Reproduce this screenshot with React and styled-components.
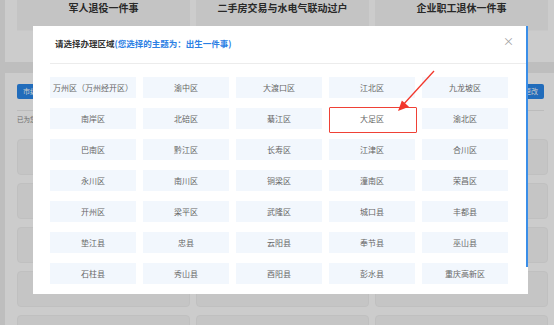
import React from "react";
import styled, { createGlobalStyle } from "styled-components";

const topics = ["军人退役一件事", "二手房交易与水电气联动过户", "企业职工退休一件事"];

const areas = [
  "万州区（万州经开区）", "渝中区", "大渡口区", "江北区", "九龙坡区",
  "南岸区", "北碚区", "綦江区", "大足区", "渝北区",
  "巴南区", "黔江区", "长寿区", "江津区", "合川区",
  "永川区", "南川区", "铜梁区", "潼南区", "荣昌区",
  "开州区", "梁平区", "武隆区", "城口县", "丰都县",
  "垫江县", "忠县", "云阳县", "奉节县", "巫山县",
  "石柱县", "秀山县", "酉阳县", "彭水县", "重庆高新区",
];

const GlobalStyle = createGlobalStyle`
  html, body {
    margin: 0;
    padding: 0;
  }
  body {
    width: 554px;
    height: 325px;
    overflow: hidden;
    background: #eeeeee;
    font-family: "Noto Sans CJK SC", "Noto Sans", sans-serif;
  }
`;

function App() {
  return (
    <>
      <GlobalStyle />
      <Page>
        <TopPanel>
          <TopicRow>
            {topics.map((t) => (
              <TopicCard key={t}>{t}</TopicCard>
            ))}
          </TopicRow>
        </TopPanel>
        <ListPanel>
          <Toolbar>
            <BlueButton>市级事项</BlueButton>
            <BlueButton>切换区域更改</BlueButton>
          </Toolbar>
          <Hint>已为您筛选出以下事项</Hint>
          <CardGrid>
            {Array.from({ length: 15 }).map((_, i) => (
              <ItemCard key={i} />
            ))}
          </CardGrid>
        </ListPanel>
      </Page>

      <Backdrop />
      <Modal>
        <Header>
          <Title>
            请选择办理区域<Topic>(您选择的主题为：出生一件事)</Topic>
          </Title>
          <Close>×</Close>
        </Header>
        <AreaGrid>
          {areas.map((a) => (
            <AreaCell key={a} $active={a === "大足区"}>
              {a}
            </AreaCell>
          ))}
        </AreaGrid>
        <ScrollThumb />
        <Arrow width="495" height="268" viewBox="0 0 495 268">
          <line x1="401" y1="45" x2="369" y2="80" stroke="#f2372c" strokeWidth="1.3" />
          <polygon points="365,85 376,80.8 368.9,74.4" fill="#f2372c" />
        </Arrow>
      </Modal>
    </>
  );
}

export default App;

// page under the mask
const Page = styled.div`
  height: 325px;
  padding-left: 5px;
  display: flex;
  flex-direction: column;
  gap: 11px;
  overflow: hidden;
`;

const TopPanel = styled.div`
  flex: none;
  height: 62px;
  background: #fff;
  padding: 0 6px 0 12px;
`;

const TopicRow = styled.div`
  display: grid;
  grid-template-columns: repeat(3, 173px);
  column-gap: 6px;
`;

const TopicCard = styled.div`
  height: 28px;
  padding-top: 2px;
  background: #f6f6f6;
  border-bottom: 1px solid #fbfbfb;
  text-align: center;
  font-size: 10px;
  line-height: 12px;
  font-weight: 700;
  color: #333;
`;

const ListPanel = styled.div`
  flex: 1;
  min-height: 0;
  overflow: hidden;
  background: #fff;
  padding: 11px 6px 0 12px;
`;

const Toolbar = styled.div`
  display: flex;
  justify-content: space-between;
  margin-right: 4px;
  padding-bottom: 11px;
  border-bottom: 1px solid #ececec;
`;

const BlueButton = styled.div`
  height: 15px;
  padding: 0 6px;
  background: #2a87ea;
  border-radius: 2px;
  color: #fff;
  font-size: 7px;
  line-height: 15px;
`;

const Hint = styled.div`
  margin-top: 4px;
  font-size: 6.5px;
  line-height: 8px;
  color: #888;
`;

const CardGrid = styled.div`
  margin-top: 16px;
  display: grid;
  grid-template-columns: repeat(3, 173px);
  grid-auto-rows: 36px;
  gap: 8px 6px;
`;

const ItemCard = styled.div`
  background: #f7f7f7;
  border: 1px solid #f1f1f1;
  border-radius: 4px;
`;

// dialog
const Backdrop = styled.div`
  position: fixed;
  inset: 0;
  background: rgba(0, 0, 0, 0.2);
`;

const Modal = styled.div`
  position: fixed;
  top: 26px;
  left: 33px;
  width: 495px;
  height: 268px;
  box-sizing: border-box;
  padding: 0 20px 10px 17px;
  background: #fff;
`;

const Header = styled.div`
  display: flex;
  justify-content: space-between;
  align-items: center;
  margin-right: -18px;
  padding: 11px 13px 14px 5px;
  border-bottom: 1px solid #ececec;
`;

const Title = styled.div`
  font-size: 8.5px;
  line-height: 12px;
  font-weight: 700;
  color: #333;
`;

const Topic = styled.span`
  color: #2b80e4;
`;

const Close = styled.span`
  width: 10px;
  text-align: center;
  font-size: 11px;
  line-height: 10px;
  color: #a0a0a0;
  margin-top: -4px;
`;

const AreaGrid = styled.div`
  margin-top: 13px;
  display: grid;
  grid-template-columns: repeat(5, 86px);
  grid-auto-rows: 21px;
  gap: 10px 7px;
`;

const AreaCell = styled.div`
  position: relative;
  display: flex;
  align-items: center;
  justify-content: center;
  background: ${(p) => (p.$active ? "#fff" : "#f2f7fd")};
  color: #666;
  font-size: 8px;
  white-space: nowrap;

  &::after {
    content: "";
    display: ${(p) => (p.$active ? "block" : "none")};
    position: absolute;
    top: -1px;
    left: 0;
    right: -2px;
    bottom: -4px;
    border: 1.5px solid #ef4136;
    border-radius: 1px;
  }
`;

const ScrollThumb = styled.div`
  position: absolute;
  top: 0;
  right: 0;
  width: 2px;
  height: 241px;
  background: #3a8ee8;
`;

const Arrow = styled.svg`
  position: absolute;
  top: 0;
  left: 0;
  pointer-events: none;
`;
